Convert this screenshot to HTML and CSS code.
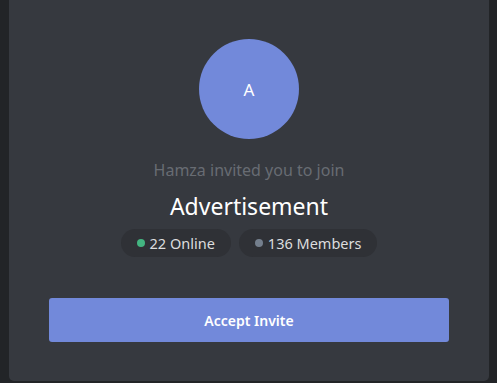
FILE: index.html
```html
<!DOCTYPE html>
<html lang="en">
<head>
  <meta charset="UTF-8" />
  <title>Invite</title>
  <link rel="stylesheet" href="styles.css">
</head>
<body>
  <div class="page">
    <div class="invite">
      <div class="avatar">A</div>
      <p class="invited">Hamza invited you to join</p>
      <h1 class="server">Advertisement</h1>
      <div class="stats">
        <span class="pill"><i class="dot online"></i>22 Online</span>
        <span class="pill"><i class="dot"></i>136 Members</span>
      </div>
      <button class="btn-accept">Accept Invite</button>
    </div>
  </div>
</body>
</html>
```

FILE: styles.css
```css
body {
  margin: 0;
  font-family: "Noto Sans", "Open Sans", sans-serif;
  background-color: #222427;
  color: #fff;
}

.page {
  padding: 0 8px 2px 9px;
}

.invite {
  height: 381px;
  background-color: #36393f;
  border-radius: 0 0 5px 5px;
  display: flex;
  flex-direction: column;
  align-items: center;
  padding-top: 39px;
  box-sizing: border-box;
}

.avatar {
  width: 100px;
  height: 100px;
  border-radius: 50%;
  background-color: #7289da;
  display: flex;
  align-items: center;
  justify-content: center;
  font-size: 17px;
}

.invited {
  margin: 21px 0 0;
  font-size: 16px;
  line-height: 20px;
  color: #686c73;
}

.server {
  margin: 11px 0 0;
  font-size: 23px;
  font-weight: normal;
  line-height: 30px;
}

.stats {
  display: flex;
  gap: 8px;
  margin-top: 8px;
}

.pill {
  display: flex;
  align-items: center;
  height: 28px;
  padding: 0 16px 0 16px;
  border-radius: 14px;
  background-color: #2f3136;
  color: #dcddde;
  font-size: 14.5px;
}

.dot {
  width: 8px;
  height: 8px;
  border-radius: 50%;
  background-color: #747f8d;
  margin-right: 5px;
}

.dot.online {
  background-color: #43b581;
}

.btn-accept {
  margin-top: 41px;
  width: 400px;
  height: 44px;
  border: none;
  border-radius: 3px;
  background-color: #7289da;
  color: #fff;
  font-family: inherit;
  font-size: 14px;
  font-weight: 600;
  cursor: pointer;
}
```
